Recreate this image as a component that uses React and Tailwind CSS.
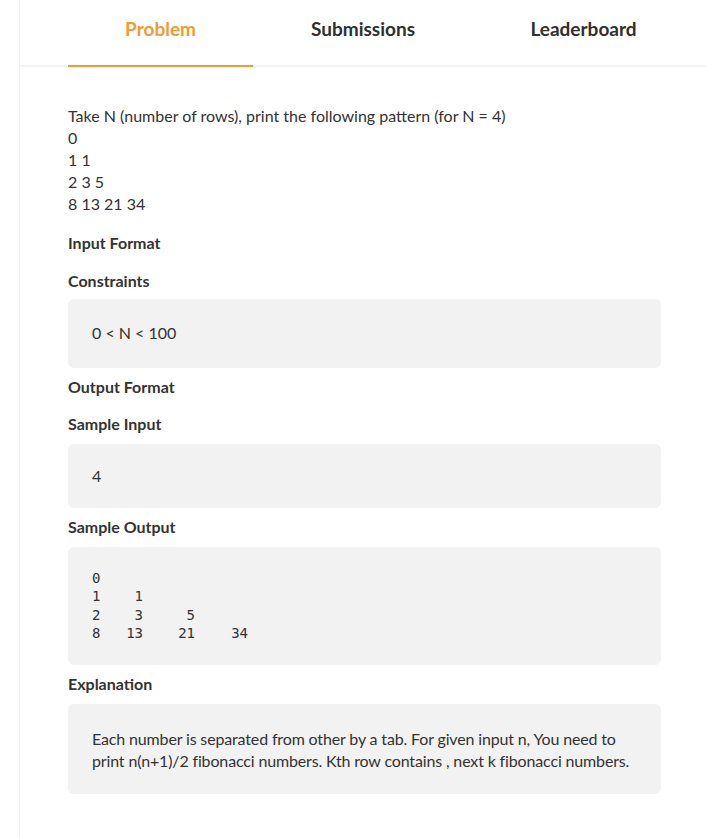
import React from 'react';

const rows = [
  ['0'],
  ['1', '1'],
  ['2', '3', '5'],
  ['8', '13', '21', '34'],
];

const colWidths = ['w-[8px] text-left', 'w-[43px] text-right', 'w-[52px] text-right', 'w-[53px] text-right'];

function Heading({ children, className = '' }) {
  return <h3 className={`text-[16px] font-bold leading-[22px] text-[#333] ${className}`}>{children}</h3>;
}

function Box({ children, className = '' }) {
  return <div className={`bg-[#f2f2f2] rounded-md px-6 ${className}`}>{children}</div>;
}

export default function App() {
  const tabs = [
    { label: 'Problem', w: 'w-[185px]', active: true },
    { label: 'Submissions', w: 'w-[220px]' },
    { label: 'Leaderboard', w: 'w-[221px]' },
  ];

  return (
    <div className="min-h-screen bg-white font-['Lato','Open_Sans',sans-serif] text-[#333]">
      <div className="ml-[19px] min-h-[837px] border-l border-[#eeeeee]">
        <nav className="flex border-b-2 border-[#f2f2f2] pl-[48px]">
          {tabs.map(tab => (
            <button
              key={tab.label}
              className={`${tab.w} -mb-[2px] border-b-2 pt-[18px] pb-[25px] text-center text-[19px] font-bold leading-[22px] ${tab.active ? 'border-[#f39a33] text-[#f39a33]' : 'border-transparent text-[#2f2f2f]'}`}
            >
              {tab.label}
            </button>
          ))}
        </nav>

        <div className="pl-[48px] pr-[45px] pt-[38px] pb-10 text-[16px] leading-[22px]">
          <div>
            <p>Take N (number of rows), print the following pattern (for N = 4)</p>
            <p>0</p>
            <p>1 1</p>
            <p>2 3 5</p>
            <p>8 13 21 34</p>
          </div>

          <Heading className="mt-[17px]">Input Format</Heading>
          <Heading className="mt-[16px]">Constraints</Heading>
          <Box className="mt-[7px] pt-[23px] pb-[24px]">
            <p>0 &lt; N &lt; 100</p>
          </Box>

          <Heading className="mt-[8px]">Output Format</Heading>
          <Heading className="mt-[15px]">Sample Input</Heading>
          <Box className="mt-[9px] pt-[21px] pb-[21px]">
            <p>4</p>
          </Box>

          <Heading className="mt-[8px]">Sample Output</Heading>
          <Box className="mt-[9px] pt-[22px] pb-[23px]">
            <div className="font-['DejaVu_Sans_Mono',monospace] text-[14px] leading-[18.3px] text-[#333]">
              {rows.map((row, i) => (
                <div key={i} className="flex">
                  {row.map((n, j) => (
                    <span key={j} className={`${colWidths[j]} shrink-0`}>{n}</span>
                  ))}
                </div>
              ))}
            </div>
          </Box>

          <Heading className="mt-[8px]">Explanation</Heading>
          <Box className="mt-[9px] pt-[24px] pb-[22px]">
            <p className="whitespace-nowrap tracking-[-0.15px]">
              Each number is separated from other by a tab. For given input n, You need to
              <br />
              print n(n+1)/2 fibonacci numbers. Kth row contains , next k fibonacci numbers.
            </p>
          </Box>
        </div>
      </div>
    </div>
  );
}
